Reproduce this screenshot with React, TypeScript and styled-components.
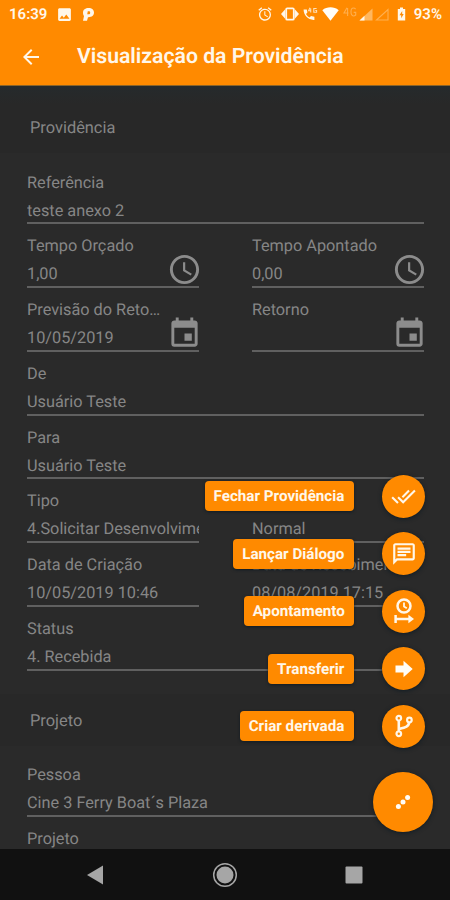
import React from 'react';
import styled, { createGlobalStyle } from 'styled-components';
import {
  MdAccessTime,
  MdAlarm,
  MdArrowBack,
  MdDoneAll,
  MdEvent,
  MdOutlineChat,
  MdPhoto,
} from 'react-icons/md';

const GlobalStyle = createGlobalStyle`
  * { box-sizing: border-box; }
  body { margin: 0; background: #111; }
  svg { display: block; flex: none; }
`;

const ORANGE = '#ff8a00';

const Screen = styled.div`
  position: relative;
  display: flex;
  flex-direction: column;
  width: 450px;
  height: 900px;
  overflow: hidden;
  background: #2a2a2a;
  font-family: Roboto, 'Liberation Sans', sans-serif;
  text-rendering: geometricPrecision;
  color: #868686;
`;

const Header = styled.header`
  flex: none;
  height: 86px;
  background: ${ORANGE};
  border-bottom: 1px solid #8b6429;
  color: #fff7ea;
`;

const StatusBar = styled.div`
  display: flex;
  align-items: center;
  justify-content: space-between;
  height: 28px;
  padding: 0 8px 0 9px;
`;

const StatusGroup = styled.div<{ $gap: number }>`
  display: flex;
  align-items: center;
  gap: ${(p) => p.$gap}px;
`;

const StatusText = styled.span`
  font-size: 15px;
  font-weight: 600;
  line-height: 20px;
`;

const AppBar = styled.div`
  display: flex;
  align-items: center;
  height: 57px;
  padding-left: 19px;
`;

const Title = styled.h1`
  margin: 0 0 0 34px;
  font-size: 21.2px;
  font-weight: 600;
  line-height: 28px;
  white-space: nowrap;
`;

const Content = styled.main`
  flex: 1;
  min-height: 0;
  overflow: hidden;
`;

const SectionTitle = styled.h2<{ $first?: boolean }>`
  display: flex;
  align-items: center;
  height: ${(p) => (p.$first ? 67 : 52)}px;
  margin: ${(p) => (p.$first ? '0 0 7.5px' : '23.25px 0 7.5px')};
  padding: ${(p) => (p.$first ? '17px 0 0 30px' : '3px 0 0 30px')};
  background: ${(p) => (p.$first ? 'linear-gradient(#252a2c, #282828 18px)' : '#282828')};
  font-size: 16.4px;
  font-weight: 400;
`;

const Fields = styled.div`
  display: grid;
  grid-template-columns: 172px 172px;
  column-gap: 53px;
  grid-auto-rows: 63.75px;
  padding-left: 27px;
`;

const FieldBox = styled.div<{ $wide?: boolean }>`
  display: grid;
  grid-template-columns: minmax(0, 1fr) auto;
  grid-template-rows: 20px 20px;
  row-gap: 8px;
  grid-column: ${(p) => (p.$wide ? '1 / -1' : 'auto')};
  padding-top: 12.1px;
  border-bottom: 2px solid #606060;
  font-size: 16.3px;
  line-height: 20px;
  white-space: nowrap;
`;

const Label = styled.span<{ $short?: boolean }>`
  grid-column: 1 / -1;
  max-width: ${(p) => (p.$short ? '134px' : 'none')};
  overflow: hidden;
  text-overflow: ellipsis;
`;

const Value = styled.span`
  overflow: hidden;
`;

const FieldIcon = styled.span`
  display: flex;
  align-items: center;
  height: 20px;
  margin: -5px -3px 0 0;
  color: #8c8c8c;
`;

type FieldProps = {
  label?: string;
  value?: string;
  wide?: boolean;
  short?: boolean;
  icon?: React.ReactNode;
};

const Field = ({ label, value, wide, short, icon }: FieldProps) => (
  <FieldBox $wide={wide}>
    <Label $short={short}>{label}</Label>
    <Value>{value}</Value>
    {icon && <FieldIcon>{icon}</FieldIcon>}
  </FieldBox>
);

const SpeedDial = styled.div`
  position: absolute;
  right: 17px;
  bottom: 68px;
  display: flex;
  flex-direction: column;
  align-items: flex-end;
`;

const Action = styled.div`
  display: flex;
  align-items: center;
  gap: 28.5px;
  height: 57.5px;
  padding-right: 8px;
`;

const ActionLabel = styled.span<{ $width: number }>`
  display: flex;
  align-items: center;
  justify-content: center;
  width: ${(p) => p.$width}px;
  height: 30px;
  border-radius: 4px;
  background: ${ORANGE};
  box-shadow: 0 1px 3px #101c24;
  color: #fff7ea;
  font-size: 15.2px;
  font-weight: 700;
  white-space: nowrap;
`;

const ActionButton = styled.button`
  display: flex;
  align-items: center;
  justify-content: center;
  width: 43px;
  height: 43px;
  padding: 0;
  border: 0;
  border-radius: 50%;
  background: ${ORANGE};
  box-shadow: 0 1px 4px #101c24;
  color: #fff7ea;
`;

const MainButton = styled(ActionButton)`
  width: 60px;
  height: 60px;
  margin-top: 17px;
`;

const NavBar = styled.nav`
  display: flex;
  align-items: center;
  justify-content: space-between;
  flex: none;
  height: 51px;
  padding: 0 87px 0 87px;
  background: #111;
`;

const PIcon = () => (
  <svg width="13" height="15" viewBox="0 0 13 15">
    <path fillRule="evenodd" fill="currentColor" d="M1 5.5C1 2.5 3.5 1 6.6 1 10 1 12 3 12 5.6 12 8.6 9.6 10.4 6 10.2L5 13.7H1L2 9C1.3 8 1 7 1 5.5ZM5.8 4.3 5.2 7.3H6.5C7.6 7.3 8.2 6.7 8.2 5.7 8.2 4.8 7.6 4.3 6.8 4.3Z" />
  </svg>
);

const VibrateIcon = () => (
  <svg width="18" height="14" viewBox="0 0 18 14">
    <path fill="currentColor" d="M4.2 2.2v9.6L0 7ZM13.8 2.2v9.6L18 7Z" />
    <rect x="5.2" y="1.3" width="7.6" height="11.4" rx="1" fill={ORANGE} stroke="currentColor" strokeWidth="1.8" />
  </svg>
);

const CallIcon = () => (
  <svg width="15" height="14" viewBox="0 0 15 14">
    <path fill="currentColor" d="M.6 2.6h3.2l.6 2.8-1.4 1.6c.9 1.5 1.9 2.5 3.5 3.4L8 9l3.4.7v3.2C5.5 13.4.6 8.4.6 2.6Z" />
    <path fill="none" stroke="#ffe0b8" strokeWidth="1.1" d="M7 .8 5.6 3.8h2.6M7.7 1.5v4M13.6 1.5h-2.8v3.7h2.8V3.5h-1.3" />
  </svg>
);

const WifiIcon = () => (
  <svg width="17" height="14" viewBox="0 0 17 14">
    <path fill="#fffdf8" d="M.3 3.2C5-.6 12-.6 16.7 3.2L8.5 13.7Z" />
  </svg>
);

const FourGIcon = () => (
  <svg width="14" height="16" viewBox="0 0 14 16">
    <path fill="none" stroke="#ffae4c" strokeWidth="1.1" d="M4 1.8 1 7h4.5M4.6 2v8M12.6 3.1Q11.8 2 10.5 2 8 2 8 5.8T10.4 10q1.3 0 2.3-1V6.4h-2" />
  </svg>
);

const SignalIcon = ({ filled }: { filled?: boolean }) => (
  <svg width="14" height="13" viewBox="0 0 14 13">
    {filled ? (
      <>
        <path fill="#ffb75f" d="M.5 12.5 13.5.5v12Z" />
        <path fill="#fff7ea" d="M.5 12.5 5.5 7.8v4.7Z" />
      </>
    ) : (
      <path fill="none" stroke="#ffb04f" strokeWidth="1.1" d="M1.5 12 13 1.5V12Z" />
    )}
  </svg>
);

const BatteryIcon = () => (
  <svg width="9" height="14" viewBox="0 0 9 14">
    <path fillRule="evenodd" fill="currentColor" d="M3 .5h3V2h2.2v11.5H.8V2H3ZM5.2 4 2.5 8.2h1.7v3.1L6.7 7H5.2Z" />
  </svg>
);

const ClockRangeIcon = () => (
  <svg width="22" height="26" viewBox="0 0 22 26" fill="none" stroke="currentColor" strokeWidth="2.5">
    <circle cx="11" cy="8" r="6.5" />
    <path strokeWidth="1.8" d="M11 4.4v4l2.8 1.8" />
    <path d="M2.6 17v8M2.6 21h14" />
    <path fill="currentColor" stroke="none" d="M15.4 16.7 21 21l-5.6 4.3Z" />
  </svg>
);

const BoldArrowIcon = () => (
  <svg width="20" height="18" viewBox="0 0 20 18">
    <path fill="#fffdf8" d="M1.5 5.5h8V.8L18.7 9l-9.2 8.2v-4.7h-8Z" />
  </svg>
);

const BranchIcon = () => (
  <svg width="20" height="24" viewBox="0 0 20 24" fill="none" stroke="currentColor" strokeWidth="2.2">
    <circle cx="4.8" cy="4.2" r="2.3" />
    <circle cx="4.8" cy="19.8" r="2.3" />
    <circle cx="15.4" cy="6" r="2.3" />
    <path strokeWidth="2.6" d="M4.8 6.5v11M15.2 8.2c-.3 4.4-3.5 5.2-10.2 6.8" />
  </svg>
);

const MoreIcon = () => (
  <svg width="16" height="16" viewBox="0 0 16 16" fill="#fffdf8">
    <circle cx="3.4" cy="12.6" r="2.5" />
    <circle cx="8" cy="8" r="2.5" />
    <circle cx="12.6" cy="3.4" r="2.5" />
  </svg>
);

const clock = <MdAccessTime size={35} />;
const calendar = <MdEvent size={35} />;

const actions = [
  { label: 'Fechar Providência', width: 149, icon: <MdDoneAll size={25} /> },
  { label: 'Lançar Diálogo', width: 120.5, icon: <MdOutlineChat size={26} /> },
  { label: 'Apontamento', width: 109.5, icon: <ClockRangeIcon /> },
  { label: 'Transferir', width: 85.5, icon: <BoldArrowIcon /> },
  { label: 'Criar derivada', width: 114, icon: <BranchIcon /> },
];

export default function App() {
  return (
    <Screen>
      <GlobalStyle />
      <Header>
        <StatusBar>
          <StatusGroup $gap={9}>
            <StatusText>16:39</StatusText>
            <MdPhoto size={17} />
            <PIcon />
          </StatusGroup>
          <StatusGroup $gap={8}>
            <MdAlarm size={16} />
            <StatusGroup $gap={4}>
              <VibrateIcon />
              <CallIcon />
              <WifiIcon />
              <StatusGroup $gap={2}>
                <FourGIcon />
                <SignalIcon filled />
                <SignalIcon />
              </StatusGroup>
            </StatusGroup>
            <BatteryIcon />
            <StatusText>93%</StatusText>
          </StatusGroup>
        </StatusBar>
        <AppBar>
          <MdArrowBack size={24} />
          <Title>Visualização da Providência</Title>
        </AppBar>
      </Header>
      <Content>
        <SectionTitle $first>Providência</SectionTitle>
        <Fields>
          <Field wide label="Referência" value="teste anexo 2" />
          <Field label="Tempo Orçado" value="1,00" icon={clock} />
          <Field label="Tempo Apontado" value="0,00" icon={clock} />
          <Field short label="Previsão do Retorno" value="10/05/2019" icon={calendar} />
          <Field label="Retorno" icon={calendar} />
          <Field wide label="De" value="Usuário Teste" />
          <Field wide label="Para" value="Usuário Teste" />
          <Field label="Tipo" value="4.Solicitar Desenvolvimento" />
          <Field value="Normal" />
          <Field label="Data de Criação" value="10/05/2019 10:46" />
          <Field label="Data de Recebimento" value="08/08/2019 17:15" />
          <Field wide label="Status" value="4. Recebida" />
        </Fields>
        <SectionTitle>Projeto</SectionTitle>
        <Fields>
          <Field wide label="Pessoa" value="Cine 3 Ferry Boat´s Plaza" />
          <Field wide label="Projeto" />
        </Fields>
      </Content>
      <SpeedDial>
        {actions.map((a) => (
          <Action key={a.label}>
            <ActionLabel $width={a.width}>{a.label}</ActionLabel>
            <ActionButton aria-label={a.label}>{a.icon}</ActionButton>
          </Action>
        ))}
        <MainButton aria-label="Ações">
          <MoreIcon />
        </MainButton>
      </SpeedDial>
      <NavBar>
        <svg width="17" height="20" viewBox="0 0 17 20">
          <path fill="#a6a6a6" d="M0 10 16 .5v19Z" />
        </svg>
        <svg width="26" height="26" viewBox="0 0 26 26">
          <circle cx="13" cy="13" r="11.3" fill="none" stroke="#a6a6a6" strokeWidth="1.5" />
          <circle cx="13" cy="13" r="8.5" fill="#a6a6a6" />
        </svg>
        <svg width="18" height="18" viewBox="0 0 18 18">
          <rect x=".5" y=".5" width="17" height="17" rx="1" fill="#a6a6a6" />
        </svg>
      </NavBar>
    </Screen>
  );
}
